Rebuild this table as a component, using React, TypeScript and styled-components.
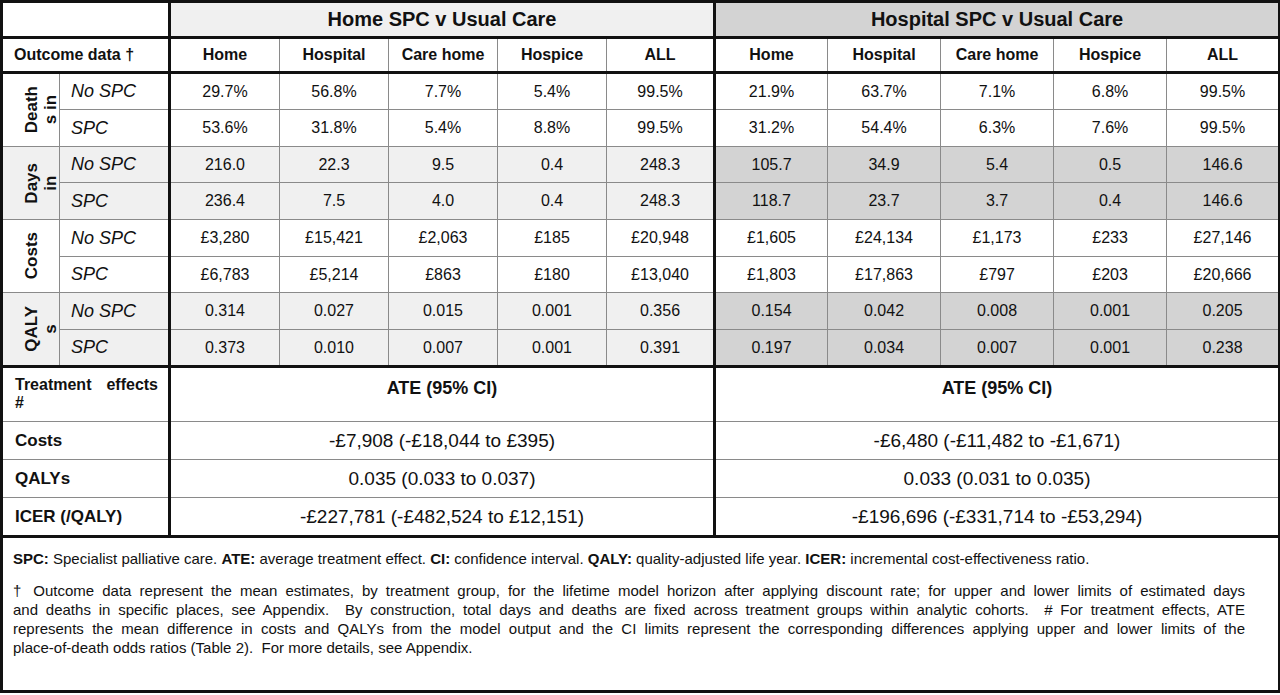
import React from 'react';
import styled, { createGlobalStyle } from 'styled-components';

const GlobalStyle = createGlobalStyle`
  html, body {
    margin: 0;
    padding: 0;
    background: #fff;
  }
  body {
    font-family: 'Liberation Sans', Arial, sans-serif;
    color: #111;
  }
`;

type Tone = 'white' | 'light' | 'dark';

const toneColor: Record<Tone, string> = {
  white: '#ffffff',
  light: '#f0f0f0',
  dark: '#d3d3d3',
};

const THICK = '3px solid #111';
const THIN = '1px solid #8a8a8a';

const Table = styled.table`
  border-collapse: collapse;
  table-layout: fixed;
  width: 1280px;
  border: ${THICK};
`;

const Group = styled.colgroup`
  border: ${THICK};
`;

const Row = styled.tr<{ $h: number; $thickTop?: boolean }>`
  height: ${p => p.$h}px;
  ${p => p.$thickTop && `border-top: ${THICK};`}
`;

const GroupHead = styled.th<{ $tone: Tone }>`
  border: ${THICK};
  background: ${p => toneColor[p.$tone]};
  font-size: 20px;
  font-weight: 700;
  text-align: center;
  padding: 0;
`;

const ColHead = styled.th<{ $big?: boolean }>`
  border: ${THIN};
  background: #fff;
  font-size: 16px;
  font-weight: 700;
  text-align: ${p => (p.$big ? 'left' : 'center')};
  padding: ${p => (p.$big ? '0 0 0 11px' : '0')};
  white-space: nowrap;
`;

const Cell = styled.td<{ $tone: Tone }>`
  border: ${THIN};
  background: ${p => toneColor[p.$tone]};
  font-size: 16px;
  text-align: center;
  padding: 0;
`;

const RowName = styled.td<{ $tone: Tone }>`
  border: ${THIN};
  background: ${p => toneColor[p.$tone]};
  font-size: 18px;
  font-style: italic;
  text-align: left;
  padding: 0 0 0 11px;
  white-space: nowrap;
`;

const SideCell = styled.td<{ $tone: Tone }>`
  border: ${THIN};
  background: ${p => toneColor[p.$tone]};
  padding: 0 0 0 19px;
  text-align: left;
  vertical-align: middle;
`;

const SideLabel = styled.span`
  display: inline-block;
  writing-mode: vertical-rl;
  transform: rotate(180deg);
  font-size: 17px;
  font-weight: 700;
  line-height: 19px;
  text-align: center;
  vertical-align: middle;
`;

const EffectLabel = styled.td<{ $top?: boolean }>`
  border: ${THIN};
  font-size: ${p => (p.$top ? '16px' : '17px')};
  font-weight: 700;
  text-align: left;
  vertical-align: ${p => (p.$top ? 'top' : 'middle')};
  padding: ${p => (p.$top ? '8px 10px 0 12px' : '0 0 0 12px')};
  line-height: 18px;
`;

const Spread = styled.div`
  display: flex;
  justify-content: space-between;
`;

const EffectValue = styled.td<{ $head?: boolean }>`
  border: ${THIN};
  font-size: ${p => (p.$head ? '18px' : '19px')};
  font-weight: ${p => (p.$head ? 700 : 400)};
  text-align: center;
  vertical-align: ${p => (p.$head ? 'top' : 'middle')};
  padding: ${p => (p.$head ? '10px 0 0 0' : '0')};
`;

const NoteCell = styled.td`
  border: ${THICK};
  vertical-align: top;
  padding: 11px 10px 0 10px;
  font-size: 15px;
  line-height: 19px;
  color: #111;
`;

const NoteLine = styled.span<{ $gap?: number; $justify?: boolean }>`
  display: block;
  width: 1232px;
  white-space: nowrap;
  margin: 0 0 ${p => p.$gap ?? 0}px 0;
  ${p => p.$justify && `
    white-space: normal;
    text-align: justify;
    text-align-last: justify;
  `}
`;

const places = ['Home', 'Hospital', 'Care home', 'Hospice', 'ALL'];

interface Group {
  label: string[];
  shaded: boolean;
  rows: { name: string; home: string[]; hosp: string[] }[];
}

const groups: Group[] = [
  {
    label: ['Death', 's in'],
    shaded: false,
    rows: [
      { name: 'No SPC', home: ['29.7%', '56.8%', '7.7%', '5.4%', '99.5%'], hosp: ['21.9%', '63.7%', '7.1%', '6.8%', '99.5%'] },
      { name: 'SPC', home: ['53.6%', '31.8%', '5.4%', '8.8%', '99.5%'], hosp: ['31.2%', '54.4%', '6.3%', '7.6%', '99.5%'] },
    ],
  },
  {
    label: ['Days', 'in'],
    shaded: true,
    rows: [
      { name: 'No SPC', home: ['216.0', '22.3', '9.5', '0.4', '248.3'], hosp: ['105.7', '34.9', '5.4', '0.5', '146.6'] },
      { name: 'SPC', home: ['236.4', '7.5', '4.0', '0.4', '248.3'], hosp: ['118.7', '23.7', '3.7', '0.4', '146.6'] },
    ],
  },
  {
    label: ['Costs'],
    shaded: false,
    rows: [
      { name: 'No SPC', home: ['£3,280', '£15,421', '£2,063', '£185', '£20,948'], hosp: ['£1,605', '£24,134', '£1,173', '£233', '£27,146'] },
      { name: 'SPC', home: ['£6,783', '£5,214', '£863', '£180', '£13,040'], hosp: ['£1,803', '£17,863', '£797', '£203', '£20,666'] },
    ],
  },
  {
    label: ['QALY', 's'],
    shaded: true,
    rows: [
      { name: 'No SPC', home: ['0.314', '0.027', '0.015', '0.001', '0.356'], hosp: ['0.154', '0.042', '0.008', '0.001', '0.205'] },
      { name: 'SPC', home: ['0.373', '0.010', '0.007', '0.001', '0.391'], hosp: ['0.197', '0.034', '0.007', '0.001', '0.238'] },
    ],
  },
];

const rowHeights = [37, 37, 36, 37, 37, 36, 37, 37];

const effects = [
  { name: 'Costs', home: '-£7,908 (-£18,044 to £395)', hosp: '-£6,480 (-£11,482 to -£1,671)', h: 38 },
  { name: 'QALYs', home: '0.035 (0.033 to 0.037)', hosp: '0.033 (0.031 to 0.035)', h: 38 },
  { name: 'ICER (/QALY)', home: '-£227,781 (-£482,524 to £12,151)', hosp: '-£196,696 (-£331,714 to -£53,294)', h: 39 },
];

const homeWidths = [110, 109, 109, 109, 108];
const hospWidths = [113, 113, 113, 113, 113];

export default function App() {
  return (
    <>
      <GlobalStyle />
      <Table>
        <Group>
          <col style={{ width: 58 }} />
          <col style={{ width: 110 }} />
        </Group>
        <Group>
          {homeWidths.map((w, i) => <col key={i} style={{ width: w }} />)}
        </Group>
        <Group>
          {hospWidths.map((w, i) => <col key={i} style={{ width: w }} />)}
        </Group>
        <tbody>
          <Row $h={36}>
            <GroupHead $tone="white" colSpan={2} />
            <GroupHead $tone="light" colSpan={5}>Home SPC v Usual Care</GroupHead>
            <GroupHead $tone="dark" colSpan={5}>Hospital SPC v Usual Care</GroupHead>
          </Row>
          <Row $h={35} $thickTop>
            <ColHead $big colSpan={2}>Outcome data †</ColHead>
            {places.map(p => <ColHead key={'a' + p}>{p}</ColHead>)}
            {places.map(p => <ColHead key={'b' + p}>{p}</ColHead>)}
          </Row>
          {groups.map((g, gi) =>
            g.rows.map((r, ri) => {
              const idx = gi * 2 + ri;
              const side: Tone = g.shaded ? 'light' : 'white';
              const hosp: Tone = g.shaded ? 'dark' : 'white';
              return (
                <Row key={idx} $h={rowHeights[idx]} $thickTop={idx === 0}>
                  {ri === 0 && (
                    <SideCell rowSpan={2} $tone={side}>
                      <SideLabel>
                        {g.label.map((l, li) => (
                          <React.Fragment key={li}>
                            {li > 0 && <br />}
                            {l}
                          </React.Fragment>
                        ))}
                      </SideLabel>
                    </SideCell>
                  )}
                  <RowName $tone={side}>{r.name}</RowName>
                  {r.home.map((v, i) => <Cell key={'h' + i} $tone={side}>{v}</Cell>)}
                  {r.hosp.map((v, i) => <Cell key={'p' + i} $tone={hosp}>{v}</Cell>)}
                </Row>
              );
            })
          )}
          <Row $h={55} $thickTop>
            <EffectLabel $top colSpan={2}>
              <Spread><span>Treatment</span><span>effects</span></Spread>
              #
            </EffectLabel>
            <EffectValue $head colSpan={5}>ATE (95% CI)</EffectValue>
            <EffectValue $head colSpan={5}>ATE (95% CI)</EffectValue>
          </Row>
          {effects.map(e => (
            <Row key={e.name} $h={e.h}>
              <EffectLabel colSpan={2}>{e.name}</EffectLabel>
              <EffectValue colSpan={5}>{e.home}</EffectValue>
              <EffectValue colSpan={5}>{e.hosp}</EffectValue>
            </Row>
          ))}
          <Row $h={155} $thickTop>
            <NoteCell colSpan={12}>
              <NoteLine $gap={13}>
                <b>SPC:</b> Specialist palliative care. <b>ATE:</b> average treatment effect. <b>CI:</b> confidence interval. <b>QALY:</b> quality-adjusted life year. <b>ICER:</b> incremental cost-effectiveness ratio.
              </NoteLine>
              <NoteLine $justify>
                † Outcome data represent the mean estimates, by treatment group, for the lifetime model horizon after applying discount rate; for upper and lower limits of estimated days
              </NoteLine>
              <NoteLine $justify>
                and deaths in specific places, see Appendix.&nbsp; By construction, total days and deaths are fixed across treatment groups within analytic cohorts.&nbsp; # For treatment effects, ATE
              </NoteLine>
              <NoteLine $justify>
                represents the mean difference in costs and QALYs from the model output and the CI limits represent the corresponding differences applying upper and lower limits of the
              </NoteLine>
              <NoteLine>
                place-of-death odds ratios (Table 2).&nbsp; For more details, see Appendix.
              </NoteLine>
            </NoteCell>
          </Row>
        </tbody>
      </Table>
    </>
  );
}
